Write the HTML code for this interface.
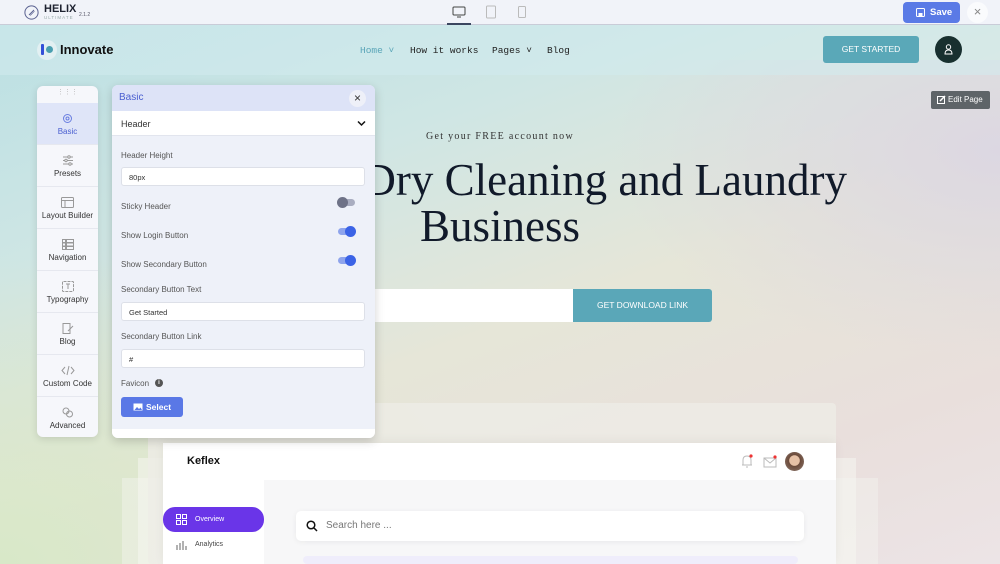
<!DOCTYPE html>
<html><head><meta charset="utf-8"><style>
*{margin:0;padding:0;box-sizing:border-box}
body{width:1000px;height:564px;overflow:hidden;position:relative;font-family:"Liberation Sans",sans-serif;
background:linear-gradient(160deg,#b9dfe3 0%,#cfe6e4 30%,#e6e6d8 55%,#e9dfdc 80%,#ece4e6 100%);}
.bgl{position:absolute;left:0;top:250px;width:500px;height:314px;background:radial-gradient(ellipse at 0% 100%,#d8e8c8 0%,rgba(216,232,200,0) 70%)}
.bgr{position:absolute;right:0;top:60px;width:400px;height:300px;background:radial-gradient(ellipse at 100% 30%,#dcd7e2 0%,rgba(220,215,226,0) 70%)}
.abs{position:absolute}
.tb{left:0;top:0;width:1000px;height:25px;background:#f1f3f9;border-bottom:1px solid #c9ccd8}
.nav{left:0;top:25px;width:1000px;height:50px;background:rgba(210,235,238,.55)}
.mono{font-family:"Liberation Mono",monospace;font-size:9.5px;color:#222}
.side{left:37px;top:86px;width:61px;height:351px;background:#f6f7fb;border-radius:6px;box-shadow:0 2px 8px rgba(0,0,0,.12);overflow:hidden}
.si{height:42px;border-bottom:1px solid #e6e8ef;text-align:center;font-size:8px;color:#333;padding-top:10px}
.si svg{display:block;margin:0 auto 3px}
.panel{left:112px;top:85px;width:263px;height:353px;background:#eef1f9;border-radius:6px;box-shadow:0 3px 10px rgba(0,0,0,.18);overflow:hidden}
.lbl{position:absolute;left:9px;font-size:8px;color:#555}
.inp{position:absolute;left:9px;width:244px;height:19px;background:#fff;border:1px solid #dde0e8;border-radius:3px;font-size:7.5px;color:#333;padding:5px 7px}
.tg{position:absolute;left:226px;width:17px;height:7px;border-radius:4px}
.tg i{position:absolute;top:-2px;width:11px;height:11px;border-radius:50%}
.h1{font-family:'Liberation Serif',serif;font-size:45px;color:#111a2a;white-space:nowrap}
</style></head><body>
<div class="bgl"></div><div class="bgr"></div>

<!-- toolbar -->
<div class="abs tb">
 <svg class="abs" style="left:24px;top:5px" width="15" height="15" viewBox="0 0 15 15"><circle cx="7.5" cy="7.5" r="6.6" fill="none" stroke="#5a6190" stroke-width="1"/><path d="M5 10 L10 5" stroke="#5a6190" stroke-width="1"/><path d="M6.2 10.5 L10.5 6.2" stroke="#5a6190" stroke-width=".6"/></svg>
 <div class="abs" style="left:44px;top:3px;font-weight:bold;font-size:11px;color:#1e2230">HELIX</div>
 <div class="abs" style="left:44px;top:15px;font-size:4.5px;letter-spacing:1px;color:#9aa">ULTIMATE</div>
 <div class="abs" style="left:79px;top:12px;font-size:5px;color:#556">2.1.2</div>
 <svg class="abs" style="left:452px;top:6px" width="14" height="12"><rect x="1" y="1" width="12" height="8" rx="1" fill="none" stroke="#444" stroke-width="1"/><path d="M5 11h4" stroke="#444"/></svg>
 <div class="abs" style="left:447px;top:23px;width:24px;height:2px;background:#3b4660"></div>
 <svg class="abs" style="left:485px;top:5px" width="12" height="14"><rect x="1.5" y="1" width="9" height="12" rx="1" fill="none" stroke="#bbb"/></svg>
 <svg class="abs" style="left:517px;top:5px" width="10" height="14"><rect x="1.5" y="1.5" width="7" height="11" rx="1" fill="none" stroke="#bbb"/></svg>
 <div class="abs" style="left:903px;top:2px;width:57px;height:21px;background:#5a7ae6;border-radius:4px;color:#fff;font-size:9.5px;font-weight:bold;padding:5px 0 0 27px">Save
  <svg class="abs" style="left:13px;top:6px" width="9" height="9"><rect x=".5" y=".5" width="8" height="8" rx="1" fill="none" stroke="#fff"/><rect x="2.5" y="5" width="4" height="3.5" fill="#fff"/></svg></div>
 <div class="abs" style="left:967px;top:2px;width:21px;height:21px;border-radius:50%;background:#fafbfd;color:#888;font-size:13px;text-align:center;line-height:20px">×</div>
</div>

<!-- nav -->
<div class="abs nav">
 <div class="abs" style="left:37px;top:15px;width:20px;height:20px;border-radius:50%;background:#e2f0f2"></div>
 <div class="abs" style="left:41px;top:19px;width:3px;height:11px;background:#3450d8;border-radius:1px"></div>
 <div class="abs" style="left:46px;top:21px;width:7px;height:7px;border-radius:50%;background:#4a9fb0"></div>
 <div class="abs" style="left:60px;top:17px;font-weight:bold;font-size:13px;color:#111">Innovate</div>
 <div class="abs mono" style="left:360px;top:20px;color:#5aa5b8">Home ˅</div>
 <div class="abs mono" style="left:410px;top:20px">How it works</div>
 <div class="abs mono" style="left:492px;top:20px">Pages ˅</div>
 <div class="abs mono" style="left:547px;top:20px">Blog</div>
 <div class="abs" style="left:823px;top:11px;width:96px;height:27px;background:#5aa8b8;border-radius:3px;color:#fff;font-size:8.5px;text-align:center;line-height:27px">GET STARTED</div>
 <div class="abs" style="left:935px;top:11px;width:27px;height:27px;border-radius:50%;background:#18302f"></div>
 <svg class="abs" style="left:944px;top:19px" width="9" height="11"><circle cx="4.5" cy="3" r="2.2" fill="none" stroke="#fff"/><path d="M1 10 Q1 6 4.5 6 Q8 6 8 10Z" fill="none" stroke="#fff"/></svg>
</div>

<div class="abs" style="left:931px;top:91px;width:59px;height:18px;background:#5e6468;border-radius:2px;color:#fff;font-size:8px;line-height:18px;padding-left:17px">Edit Page
 <svg class="abs" style="left:6px;top:4px" width="9" height="9"><rect x=".5" y="1.5" width="7" height="7" fill="none" stroke="#fff"/><path d="M3 6 L8 1" stroke="#fff" stroke-width="1.5"/></svg></div>

<!-- hero -->
<div class="abs" style="left:350px;top:131px;width:300px;text-align:center;font-family:'Liberation Serif',serif;font-size:10px;letter-spacing:1.3px;color:#333">Get your FREE account now</div>
<div class="abs h1" style="right:153px;top:154px">Dry Cleaning and Laundry</div>
<div class="abs h1" style="left:300px;top:200px;width:400px;text-align:center">Business</div>
<div class="abs" style="left:340px;top:289px;width:233px;height:33px;background:#fff;border-radius:3px 0 0 3px"></div>
<div class="abs" style="left:573px;top:289px;width:139px;height:33px;background:#5aa7b8;border-radius:0 3px 3px 0;color:#fff;font-size:8.5px;text-align:center;line-height:33px">GET DOWNLOAD LINK</div>

<!-- dashboard mock -->
<div class="abs" style="left:122px;top:478px;width:756px;height:86px;background:rgba(245,245,240,.45)"></div>
<div class="abs" style="left:138px;top:458px;width:718px;height:106px;background:rgba(245,245,240,.55)"></div>
<div class="abs" style="left:148px;top:403px;width:688px;height:161px;background:rgba(238,236,230,.8);border-radius:4px"></div>
<div class="abs" style="left:163px;top:443px;width:673px;height:121px;background:#fff;box-shadow:0 -2px 10px rgba(0,0,0,.05)">
 <div class="abs" style="left:24px;top:12px;font-weight:bold;font-size:11px;color:#111">Keflex</div>
 <svg class="abs" style="left:577px;top:10px" width="14" height="16"><path d="M3 12 V7 Q3 3 7 3 Q11 3 11 7 V12 Z M2 12h10 M6 14h2" fill="none" stroke="#bbb"/><circle cx="11" cy="3" r="1.6" fill="#e33"/></svg>
 <svg class="abs" style="left:600px;top:11px" width="15" height="14"><rect x="1" y="4" width="12" height="9" fill="none" stroke="#bbb"/><path d="M1 4 L7 9 L13 4" fill="none" stroke="#bbb"/><circle cx="12" cy="3" r="1.6" fill="#e33"/></svg>
 <div class="abs" style="left:622px;top:9px;width:19px;height:19px;border-radius:50%;background:radial-gradient(circle at 50% 45%,#e6c1a6 0 35%,#6b4a3a 40%,#8d7a70 100%)"></div>
 <div class="abs" style="left:101px;top:37px;width:572px;height:84px;background:#f7f7f8"></div>
 <div class="abs" style="left:0;top:64px;width:101px;height:25px;background:#6a35e8;border-radius:12px;color:#fff;font-size:7px;line-height:25px;padding-left:32px">Overview
  <svg class="abs" style="left:13px;top:7px" width="11" height="11"><rect x=".5" y=".5" width="4" height="4" fill="none" stroke="#fff"/><rect x="6.5" y=".5" width="4" height="4" fill="none" stroke="#fff"/><rect x=".5" y="6.5" width="4" height="4" fill="none" stroke="#fff"/><rect x="6.5" y="6.5" width="4" height="4" fill="none" stroke="#fff"/></svg></div>
 <div class="abs" style="left:32px;top:98px;font-size:7px;color:#444">Analytics</div>
 <svg class="abs" style="left:13px;top:97px" width="11" height="11"><path d="M1 10V5 M4 10V3 M7 10V1 M10 10V6" stroke="#999" stroke-width="1.5"/></svg>
 <div class="abs" style="left:133px;top:68px;width:508px;height:30px;background:#fff;border-radius:5px;box-shadow:0 1px 6px rgba(0,0,0,.06);font-size:10px;color:#777;padding:9px 0 0 30px">Search here ...
  <svg class="abs" style="left:10px;top:9px" width="12" height="12"><circle cx="5" cy="5" r="3.8" fill="none" stroke="#111" stroke-width="1.5"/><path d="M8 8 L11 11" stroke="#111" stroke-width="1.5"/></svg></div>
 <div class="abs" style="left:140px;top:113px;width:495px;height:8px;background:#efedfb;border-radius:5px"></div>
</div>

<!-- sidebar -->
<div class="abs side">
 <div style="height:17px;text-align:center;color:#bbb;font-size:7px;line-height:14px">⋮⋮⋮</div>
 <div class="si" style="background:#dfe5f8;color:#4a5fd0"><svg width="11" height="11"><circle cx="5.5" cy="5.5" r="4" fill="none" stroke="#6a7ee0"/><circle cx="5.5" cy="5.5" r="1.5" fill="none" stroke="#6a7ee0"/></svg>Basic</div>
 <div class="si"><svg width="12" height="11"><path d="M1 2h10M1 5.5h10M1 9h10" stroke="#999"/><circle cx="7" cy="2" r="1.2" fill="#fff" stroke="#999"/><circle cx="4" cy="5.5" r="1.2" fill="#fff" stroke="#999"/><circle cx="8" cy="9" r="1.2" fill="#fff" stroke="#999"/></svg>Presets</div>
 <div class="si"><svg width="13" height="11"><rect x=".5" y=".5" width="12" height="10" rx="1" fill="none" stroke="#999"/><path d="M.5 3.5h12M4 3.5v7" stroke="#999"/></svg>Layout Builder</div>
 <div class="si"><svg width="12" height="11"><rect x=".5" y=".5" width="3" height="3" fill="none" stroke="#999"/><rect x=".5" y="4" width="3" height="3" fill="none" stroke="#999"/><rect x=".5" y="7.5" width="3" height="3" fill="none" stroke="#999"/><rect x="4.5" y=".5" width="7" height="3" fill="none" stroke="#999"/><rect x="4.5" y="4" width="7" height="3" fill="none" stroke="#999"/><rect x="4.5" y="7.5" width="7" height="3" fill="none" stroke="#999"/></svg>Navigation</div>
 <div class="si"><svg width="12" height="11"><rect x=".5" y=".5" width="11" height="10" rx="1" fill="none" stroke="#999" stroke-dasharray="3 1"/><path d="M4 3h4M6 3v5" stroke="#999"/></svg>Typography</div>
 <div class="si"><svg width="12" height="11"><path d="M1 .5h7v10H1z" fill="none" stroke="#999"/><path d="M6 8 L11 3" stroke="#999"/></svg>Blog</div>
 <div class="si" style="color:#333"><svg width="14" height="11"><path d="M4 2 L1 5.5 L4 9 M10 2 L13 5.5 L10 9 M8 1 L6 10" fill="none" stroke="#999"/></svg>Custom Code</div>
 <div class="si" style="border:none"><svg width="12" height="11"><circle cx="4" cy="4" r="3" fill="none" stroke="#999"/><circle cx="7.5" cy="7" r="3" fill="none" stroke="#999"/></svg>Advanced</div>
</div>

<!-- panel -->
<div class="abs panel">
 <div class="abs" style="left:0;top:0;width:263px;height:26px;background:#dde3f7;color:#4a5fd0;font-size:10px;padding:7px 0 0 7px">Basic</div>
 <div class="abs" style="left:237px;top:5px;width:17px;height:17px;border-radius:50%;background:#eef0f8;color:#333;font-size:12px;text-align:center;line-height:16px">×</div>
 <div class="abs" style="left:0;top:26px;width:263px;height:25px;background:#fff;font-size:9px;color:#333;padding:8px 0 0 9px;border-bottom:1px solid #e2e5ee">Header</div>
 <svg class="abs" style="left:245px;top:35px" width="9" height="7"><path d="M1 1.5 L4.5 5 L8 1.5" fill="none" stroke="#111" stroke-width="1.5"/></svg>
 <div class="lbl" style="top:66px">Header Height</div>
 <div class="inp" style="top:82px">80px</div>
 <div class="lbl" style="top:117px">Sticky Header</div>
 <div class="tg" style="top:114px;background:#a9adc0"><i style="left:-1px;background:#6e7287"></i></div>
 <div class="lbl" style="top:146px">Show Login Button</div>
 <div class="tg" style="top:143px;background:#8ea4ec"><i style="left:7px;background:#3b63e6"></i></div>
 <div class="lbl" style="top:175px">Show Secondary Button</div>
 <div class="tg" style="top:172px;background:#8ea4ec"><i style="left:7px;background:#3b63e6"></i></div>
 <div class="lbl" style="top:200px">Secondary Button Text</div>
 <div class="inp" style="top:217px">Get Started</div>
 <div class="lbl" style="top:247px">Secondary Button Link</div>
 <div class="inp" style="top:264px">#</div>
 <div class="lbl" style="top:294px">Favicon</div>
 <div class="abs" style="left:43px;top:294px;width:8px;height:8px;border-radius:50%;background:#555;color:#fff;font-size:6px;text-align:center;line-height:8px;font-weight:bold">i</div>
 <div class="abs" style="left:9px;top:312px;width:62px;height:20px;background:#5a78e6;border-radius:3px;color:#fff;font-size:8.5px;font-weight:bold;padding:5px 0 0 25px">Select
  <svg class="abs" style="left:12px;top:6px" width="10" height="8"><rect x=".5" y=".5" width="9" height="7" fill="#fff"/><path d="M1.5 7 L4 4 L6 6 L7.5 4.5 L9 7Z" fill="#5a78e6"/></svg></div>
 <div class="abs" style="left:0;top:344px;width:263px;height:9px;background:#fff"></div>
</div>
</body></html>
